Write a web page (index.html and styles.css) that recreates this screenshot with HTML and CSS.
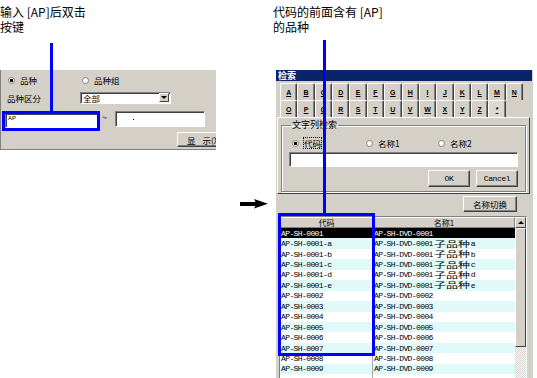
FILE: index.html
```html
<!DOCTYPE html>
<html lang="zh">

<head>
    <meta charset="UTF-8">
    <meta name="viewport" content="width=device-width, initial-scale=1.0">
    <title>检索</title>
    <link rel="stylesheet" href="styles.css">
</head>

<body>
    <div class="canvas">
        <!-- Notes above the two screens -->
        <p class="note">输入 [AP]后双击<br>按键</p>
        <div></div>
        <p class="note note-right">代码的前面含有 [AP]<br>的品种</p>

        <!-- Left: search conditions panel -->
        <div class="panel">
            <div class="p-row row-radio">
                <label class="opt opt-wide"><span class="radio on"></span>品种</label>
                <label class="opt"><span class="radio"></span>品种组</label>
            </div>
            <div class="p-row row-kind">
                <span class="kind-label">品种区分</span>
                <div class="select"><span>全部</span><span class="drop"><i></i></span></div>
            </div>
            <div class="p-row row-range">
                <div class="field field-ap">AP</div>
                <span class="tilde">~</span>
                <div class="field field-to"><i class="dot"></i></div>
            </div>
            <div class="p-row row-btn">
                <button class="win-btn show-btn">显 示(X)</button>
            </div>
        </div>

        <div class="arrow-cell">
            <svg width="28" height="10" viewBox="0 0 28 10">
                <rect x="0" y="3" width="17" height="4" fill="#000"/>
                <polygon points="14,0 28,4.8 14,9.6 16.5,4.8" fill="#000"/>
            </svg>
        </div>

        <!-- Right: search dialog -->
        <div class="dialog">
            <div class="title">检索</div>
            <div class="tabs">
                <span class="tab">A</span><span class="tab">B</span><span class="tab">C</span><span class="tab">D</span>
                <span class="tab">E</span><span class="tab">F</span><span class="tab">G</span><span class="tab">H</span>
                <span class="tab">I</span><span class="tab">J</span><span class="tab">K</span><span class="tab">L</span>
                <span class="tab">M</span><span class="tab">N</span>
                <span class="tab">O</span><span class="tab">P</span><span class="tab">Q</span><span class="tab">R</span>
                <span class="tab">S</span><span class="tab">T</span><span class="tab">U</span><span class="tab">V</span>
                <span class="tab">W</span><span class="tab">X</span><span class="tab">Y</span><span class="tab">Z</span>
                <span class="tab sel">*</span>
            </div>
            <div class="tab-body">
                <fieldset class="group">
                    <legend>文字列检索</legend>
                    <div class="g-radios">
                        <label class="opt opt-code"><span class="radio on"></span><span class="focus">代码</span></label>
                        <label class="opt opt-name"><span class="radio"></span>名称1</label>
                        <label class="opt"><span class="radio"></span>名称2</label>
                    </div>
                    <div class="text-input"></div>
                    <div class="g-btns">
                        <button class="win-btn">OK</button>
                        <button class="win-btn">Cancel</button>
                    </div>
                </fieldset>
            </div>
            <div class="switch-row">
                <button class="win-btn switch-btn">名称切换</button>
            </div>

            <div class="grid">
                <div class="grid-main">
                    <div class="g-head"><span>代码</span><span>名称1</span></div>
                    <div class="g-row sel"><span>AP-SH-0001</span><span>AP-SH-DVD-0001</span></div>
                    <div class="g-row alt"><span>AP-SH-0001-a</span><span>AP-SH-DVD-0001<b class="cj">子品种</b>a</span></div>
                    <div class="g-row"><span>AP-SH-0001-b</span><span>AP-SH-DVD-0001<b class="cj">子品种</b>b</span></div>
                    <div class="g-row alt"><span>AP-SH-0001-c</span><span>AP-SH-DVD-0001<b class="cj">子品种</b>c</span></div>
                    <div class="g-row"><span>AP-SH-0001-d</span><span>AP-SH-DVD-0001<b class="cj">子品种</b>d</span></div>
                    <div class="g-row alt"><span>AP-SH-0001-e</span><span>AP-SH-DVD-0001<b class="cj">子品种</b>e</span></div>
                    <div class="g-row"><span>AP-SH-0002</span><span>AP-SH-DVD-0002</span></div>
                    <div class="g-row alt"><span>AP-SH-0003</span><span>AP-SH-DVD-0003</span></div>
                    <div class="g-row"><span>AP-SH-0004</span><span>AP-SH-DVD-0004</span></div>
                    <div class="g-row alt"><span>AP-SH-0005</span><span>AP-SH-DVD-0005</span></div>
                    <div class="g-row"><span>AP-SH-0006</span><span>AP-SH-DVD-0006</span></div>
                    <div class="g-row alt"><span>AP-SH-0007</span><span>AP-SH-DVD-0007</span></div>
                    <div class="g-row"><span>AP-SH-0008</span><span>AP-SH-DVD-0008</span></div>
                    <div class="g-row alt"><span>AP-SH-0009</span><span>AP-SH-DVD-0009</span></div>
                    <div class="g-row"><span></span><span></span></div>
                </div>
                <div class="sb">
                    <div class="sb-up"><i></i></div>
                    <div class="sb-thumb"></div>
                    <div class="sb-track"></div>
                </div>
            </div>
        </div>

        <!-- Blue call-out marks -->
        <div class="mark line-left"></div>
        <div class="box box-left"></div>
        <div class="mark line-right"></div>
        <div class="box box-right"></div>
    </div>
</body>

</html>
```

FILE: styles.css
```css
/* Global */
* {
    margin: 0;
    padding: 0;
    box-sizing: border-box;
}

body {
    width: 537px;
    height: 378px;
    overflow: hidden;
    background: #fff;
    color: #000;
    font-family: "Noto Sans CJK SC", sans-serif;
}

.canvas {
    position: relative;
    display: grid;
    grid-template-columns: 216px 60px 257px;
    grid-template-rows: 70px 308px;
}

.note {
    font-size: 12px;
    line-height: 15px;
    padding-top: 4px;
    white-space: nowrap;
}

.note-right {
    margin-left: -3px;
}

/* Shared win controls */
.radio {
    width: 7px;
    height: 7px;
    border-radius: 50%;
    border: 1px solid #808080;
    background: #fff;
    flex: none;
}

.radio.on {
    background: radial-gradient(circle, #000 0 1.4px, #fff 1.6px);
}

.opt {
    display: flex;
    align-items: center;
    gap: 5px;
    white-space: nowrap;
}

.win-btn {
    font-family: "Noto Sans CJK SC", sans-serif;
    font-size: 8.5px;
    background: #d4d0c8;
    color: #000;
    border: 1px solid;
    border-color: #fff #404040 #404040 #fff;
    box-shadow: inset -1px -1px 0 #808080;
    white-space: nowrap;
}

.field,
.text-input {
    background: #fff;
    border: 1px solid;
    border-color: #808080 #fff #fff #808080;
    box-shadow: inset 1px 1px 0 #404040;
}

/* Left panel */
.panel {
    grid-row: 2;
    grid-column: 1;
    height: 80px;
    background: #d4d0c8;
    border-left: 1px solid #808080;
    border-bottom: 1px solid #808080;
    padding-top: 4px;
    overflow: hidden;
    font-size: 8.5px;
}

.p-row {
    display: flex;
    align-items: center;
}

.row-radio {
    height: 12px;
    padding-left: 7px;
}

.opt-wide {
    width: 74px;
}

.row-kind {
    height: 11px;
    margin-top: 6px;
    padding-left: 6px;
}

.kind-label {
    width: 73px;
}

.select {
    width: 91px;
    height: 12px;
    display: flex;
    justify-content: space-between;
    align-items: center;
    padding-left: 2px;
    background: #fff;
    border: 1px solid;
    border-color: #808080 #fff #fff #808080;
    box-shadow: inset 1px 1px 0 #404040;
    line-height: 10px;
}

.drop {
    width: 10px;
    height: 9px;
    margin-right: 1px;
    background: #d4d0c8;
    border: 1px solid;
    border-color: #fff #404040 #404040 #fff;
    display: flex;
    justify-content: center;
    align-items: center;
}

.drop i,
.sb-up i {
    border-left: 3px solid transparent;
    border-right: 3px solid transparent;
    border-top: 3px solid #000;
}

.row-range {
    height: 17px;
    margin-top: 8px;
    padding-left: 4px;
    align-items: stretch;
}

.field-ap {
    width: 93px;
    height: 15px;
    align-self: flex-end;
    font-family: "Liberation Sans", sans-serif;
    font-size: 6px;
    line-height: 7px;
    padding: 1px 2px;
}

.tilde {
    width: 6px;
    margin: 0 0 0 4px;
    font-size: 9px;
    line-height: 14px;
}

.field-to {
    width: 90px;
    height: 16px;
    margin-left: 7px;
    align-self: flex-start;
    display: flex;
    align-items: center;
    padding-left: 17px;
}

.dot {
    width: 1px;
    height: 1px;
    background: #000;
}

.row-btn {
    height: 15px;
    margin-top: 4px;
    padding-left: 176px;
}

.show-btn {
    width: 45px;
    height: 15px;
    flex: none;
    text-align: left;
    padding-left: 9px;
    word-spacing: 5px;
}

/* Arrow between the screens */
.arrow-cell {
    grid-row: 2;
    grid-column: 2;
    padding: 120px 0 0 24px;
}

/* Dialog */
.dialog {
    grid-row: 2;
    grid-column: 3;
    height: 308px;
    background: #d4d0c8;
    overflow: hidden;
    font-size: 8.5px;
}

.title {
    height: 11px;
    width: 256px;
    background: #0a246a;
    color: #fff;
    font-size: 9px;
    font-weight: bold;
    line-height: 11px;
    padding-left: 2px;
}

.tabs {
    display: grid;
    grid-template-columns: repeat(14, 17.36px);
    grid-auto-rows: 17px;
    margin: 2px 0 0 4px;
}

.tab {
    display: flex;
    justify-content: center;
    align-items: center;
    border-top: 1px solid #fff;
    border-left: 1px solid #fff;
    border-right: 1px solid #404040;
    box-shadow: inset -1px 0 0 #808080;
    border-radius: 2px 2px 0 0;
    font-family: "Liberation Sans", sans-serif;
    font-size: 7px;
    font-weight: bold;
    text-decoration: underline;
}

.tab.sel {
    background: #dcd9d2;
}

.tab-body {
    width: 253px;
    height: 77px;
    margin-left: 1px;
    padding: 0 3px;
    border: 1px solid;
    border-color: #fff #404040 #404040 #fff;
}

.group {
    margin-top: 2px;
    padding: 0 7px 4px;
    border: 1px solid #808080;
    box-shadow: inset 1px 1px 0 #fff, 1px 1px 0 #fff;
}

.group legend {
    font-size: 9px;
    line-height: 10px;
    padding: 0 1px;
    margin-left: 2px;
}

.g-radios {
    display: flex;
    height: 10px;
    margin-top: 8px;
    padding-left: 3px;
    line-height: 10px;
}

.opt-code {
    width: 74px;
}

.opt-name {
    width: 72px;
}

.focus {
    outline: 1px dotted #000;
}

.text-input {
    height: 15px;
    margin-top: 4px;
}

.g-btns {
    display: flex;
    justify-content: flex-end;
    gap: 6px;
    margin-top: 3px;
}

.g-btns .win-btn {
    width: 42px;
    height: 17px;
    font-family: "Liberation Mono", monospace;
    font-size: 8px;
    letter-spacing: -0.4px;
}

.switch-row {
    display: flex;
    justify-content: flex-end;
    margin-top: 2px;
    padding-right: 16px;
}

.switch-btn {
    width: 54px;
    height: 16px;
}

/* Result grid */
.grid {
    display: flex;
    width: 248px;
    height: 170px;
    margin: 4px 0 0 3px;
    background: #fff;
    border: 1px solid;
    border-color: #808080 #fff #fff #808080;
}

.grid-main {
    width: 235px;
}

.g-head,
.g-row {
    display: grid;
    grid-template-columns: 93px 142px;
}

.g-head span {
    height: 11px;
    font-size: 8px;
    line-height: 9px;
    text-align: center;
    background: #d4d0c8;
    border: 1px solid;
    border-color: #fff #808080 #808080 #fff;
}

.g-row {
    height: 10.45px;
    font-family: "Liberation Mono", monospace;
    font-size: 8px;
    letter-spacing: -0.6px;
    white-space: nowrap;
    overflow: hidden;
}

.g-row span {
    display: flex;
    align-items: center;
    padding-left: 1px;
    overflow: hidden;
}

.g-row span:first-child {
    border-right: 1px solid #a8a8a8;
}

.g-row.alt {
    background: #e0fafa;
}

.g-row.sel {
    background: #000;
    color: #fff;
}

/* Wide, flat CJK glyphs as in the old bitmap font */
.cj {
    display: inline-block;
    width: 37px;
    flex: none;
    font-family: "Noto Sans CJK SC", sans-serif;
    font-weight: normal;
    font-size: 8px;
    line-height: 8px;
    letter-spacing: 0;
    margin-left: 1px;
    transform: scaleX(1.5);
    transform-origin: left center;
}

.sb {
    width: 11px;
    display: flex;
    flex-direction: column;
}

.sb-up,
.sb-thumb {
    background: #d4d0c8;
    border: 1px solid;
    border-color: #fff #404040 #404040 #fff;
}

.sb-up {
    height: 11px;
    display: flex;
    justify-content: center;
    align-items: center;
}

.sb-up i {
    transform: rotate(180deg);
}

.sb-thumb {
    height: 119px;
}

.sb-track {
    flex: 1;
    background: repeating-conic-gradient(#fff 0 25%, #d4d0c8 0 50%) 0 0 / 2px 2px;
}

/* Blue call-out marks */
.mark {
    position: absolute;
    background: #00f;
}

.box {
    position: absolute;
    border: 3px solid #00f;
}

.line-left {
    left: 50px;
    top: 43px;
    width: 3px;
    height: 68px;
}

.box-left {
    left: 2px;
    top: 111px;
    width: 98px;
    height: 20px;
}

.line-right {
    left: 323px;
    top: 40px;
    width: 3px;
    height: 174px;
}

.box-right {
    left: 278px;
    top: 213px;
    width: 97px;
    height: 143px;
}
```
